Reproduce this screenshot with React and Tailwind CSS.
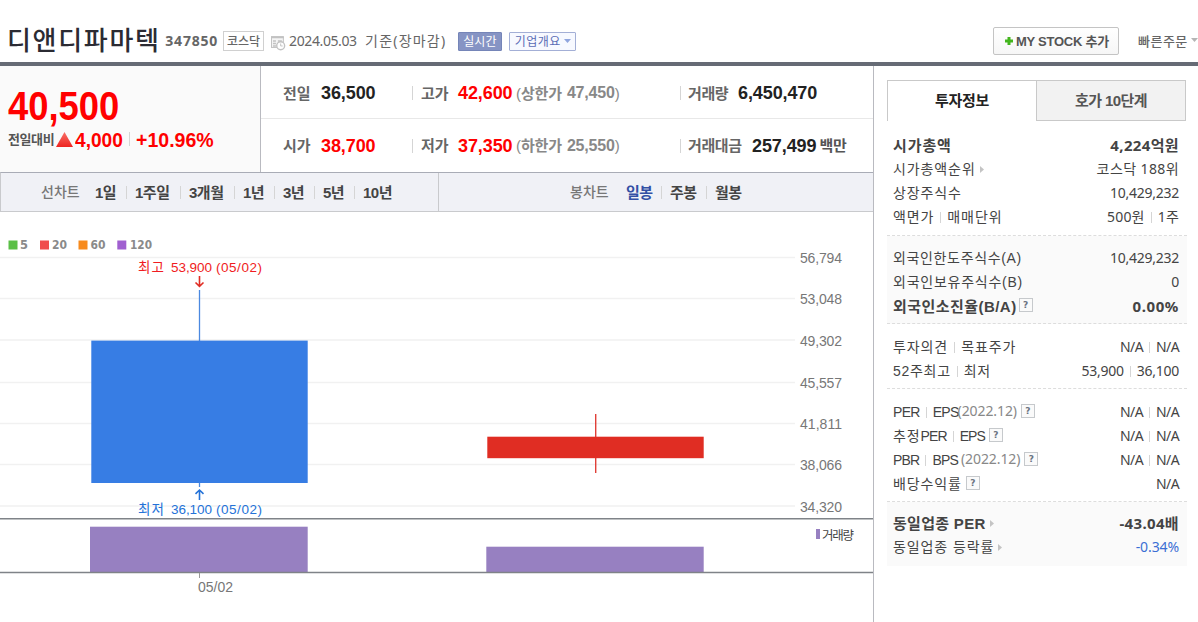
import clsx from "clsx";

const PERIODS = [
  { label: "1일", cell: "w-[40px]" },
  { label: "1주일", cell: "w-[54px]" },
  { label: "3개월", cell: "w-[54px]" },
  { label: "1년", cell: "w-[40px]" },
  { label: "3년", cell: "w-[40px]" },
  { label: "5년", cell: "w-[40px]" },
  { label: "10년", cell: "w-[40px]" },
];

const CANDLES = [
  { label: "일봉", cell: "w-[44px]", active: true },
  { label: "주봉", cell: "w-[45px]" },
  { label: "월봉", cell: "w-[45px]" },
];

const AVERAGES = [
  { x: 8.5, tx: 20, w: 8, label: "5", color: "#5abf46" },
  { x: 40, tx: 52, w: 15, label: "20", color: "#f04d4d" },
  { x: 78.5, tx: 90.5, w: 15, label: "60", color: "#f78a1d" },
  { x: 117.3, tx: 130, w: 22, label: "120", color: "#a05fd0" },
];

const GRID = [
  { y: 257.5, label: "56,794" },
  { y: 298.5, label: "53,048" },
  { y: 340, label: "49,302" },
  { y: 382.5, label: "45,557" },
  { y: 423.5, label: "41,811" },
  { y: 464.5, label: "38,066" },
  { y: 506, label: "34,320" },
];

const LATIN_KR = "font-['Liberation_Sans','Noto_Sans_CJK_KR',sans-serif]";
const TAHOMA_KR = "font-['Noto_Sans','Noto_Sans_CJK_KR',sans-serif]";

function Divider({ className }) {
  return <span className={clsx("inline-block w-px shrink-0 bg-[#d5d5d5]", className)} />;
}

function Help({ className }) {
  return (
    <span
      className={clsx(
        "relative -top-px inline-grid h-[14px] w-[14px] shrink-0 place-items-center border border-[#c6c9cc] bg-[#fafafa] font-['DejaVu_Sans',sans-serif] text-[9px] leading-none font-bold tracking-normal text-[#6b7482]",
        className
      )}
    >
      ?
    </span>
  );
}

function Arrow({ className }) {
  return (
    <svg width="4" height="7" className={clsx("shrink-0", className)}>
      <path d="M0 0L4 3.5L0 7Z" fill="#c4c4c4" />
    </svg>
  );
}

function Row({ children, value, bold, valueClass = "text-[14px] tracking-[-0.25px]" }) {
  return (
    <div
      className={clsx(
        "flex h-[24px] items-center justify-between pr-[8px] pl-[6px] leading-none whitespace-nowrap text-[#444]",
        bold && "font-bold text-[#333]"
      )}
    >
      <div className={clsx("flex items-center tracking-[0.9px]", bold ? "text-[15px]" : "text-[14px]", LATIN_KR)}>
        {children}
      </div>
      <div className={clsx("flex items-center", TAHOMA_KR, valueClass)}>{value}</div>
    </div>
  );
}

function Pair({ a, b }) {
  return (
    <>
      {a}
      <Divider className="mx-[6px] h-[11px]" />
      {b}
    </>
  );
}

function NotAvailable() {
  return (
    <span className="flex items-center tracking-[-0.6px]">
      <Pair a="N/A" b="N/A" />
    </span>
  );
}

function Header() {
  return (
    <header className="flex h-[66px] items-center border-b-4 border-[#666b75] pt-[20px] pl-[7px] leading-none whitespace-nowrap">
      <h1 className="w-[160px] pb-[4px] font-['Noto_Sans_CJK_KR',sans-serif] text-[26px] font-medium tracking-[1.7px] text-[#2b2b33]">
        디앤디파마텍
      </h1>
      <span className={clsx("w-[57px] text-[14px] font-bold tracking-[0.8px] text-[#666]", TAHOMA_KR)}>
        347850
      </span>
      <span className="ml-px grid h-[20px] w-[42px] place-items-center border border-[#d0d0d0] font-['Noto_Sans_CJK_KR',sans-serif] text-[12px] font-medium text-[#666]">
        코스닥
      </span>
      <svg width="16" height="16" viewBox="0 0 16 16" className="mt-[4px] ml-[6px]" fill="none" stroke="#c2c2c2">
        <rect x="1.5" y="1.5" width="12" height="11" fill="#f5f5f5" />
        <path d="M1 2.5H14M3 6H6M3 8.5H6M3 11H6M8 6H12" strokeWidth="1.6" />
        <circle cx="10.8" cy="10.8" r="4" fill="#fff" strokeWidth="1.4" />
        <path d="M10.8 8.5V11H12.8" />
      </svg>
      <span className={clsx("ml-[3px] flex items-center text-[#666]", TAHOMA_KR)}>
        <span className="w-[76px] text-[14px] tracking-[-0.4px]">2024.05.03</span>
        <span className="w-[93px] text-[14px] tracking-[1.2px]">기준(장마감)</span>
      </span>
      <span className="grid h-[19px] w-[44px] place-items-center rounded-[1px] border border-[#7585b8] bg-[#8694c4] font-['Noto_Sans_CJK_KR',sans-serif] text-[12px] text-white">
        실시간
      </span>
      <span className="ml-[7px] flex h-[19px] w-[68px] items-center rounded-[1px] border border-[#a3afd6] bg-[#f7f9ff] pl-[5px] font-['Noto_Sans_CJK_KR',sans-serif] text-[12px] tracking-[0.5px] text-[#5b6db5]">
        기업개요
        <svg width="7" height="4" className="ml-[3px]">
          <path d="M0 0H7L3.5 4Z" fill="#8fa5de" />
        </svg>
      </span>
      <button
        className={clsx(
          "ml-[417px] flex h-[28px] w-[126px] shrink-0 items-center rounded-[2px] border border-[#c4c4c4] bg-linear-to-b from-white to-[#f6f6f6] pl-[11px] text-[13px] font-bold tracking-[-0.25px] text-[#555]",
          LATIN_KR
        )}
      >
        <svg width="8" height="8" className="mr-[3px]">
          <path d="M2.5 0H5.5V2.5H8V5.5H5.5V8H2.5V5.5H0V2.5H2.5Z" fill="#42b51c" />
        </svg>
        MY STOCK 추가
      </button>
      <span className="ml-[19px] w-[53px] shrink-0 pb-px font-['Noto_Sans_CJK_KR',sans-serif] text-[13px] font-medium tracking-[0.5px] text-[#666]">
        빠른주문
      </span>
      <svg width="7" height="4" className="mb-[2px] shrink-0">
        <path d="M0 0H7L3.5 4Z" fill="#b5b5b5" />
      </svg>
    </header>
  );
}

function Price() {
  return (
    <div className={clsx("w-[261px] border-r border-[#b9bac0] bg-[#fafafa] pl-[8px] leading-none font-bold text-[#f00]", LATIN_KR)}>
      <div className="origin-left scale-x-[0.91] pt-[20px] text-[40px]">40,500</div>
      <div className="flex h-[26px] items-center text-[21px] whitespace-nowrap">
        <span className="w-[48px] text-[13px] tracking-[-0.4px] text-[#555]">전일대비</span>
        <svg width="17" height="15" className="mr-[2px]">
          <defs>
            <linearGradient id="up" x1="0" y1="0" x2="0" y2="1">
              <stop offset="0" stopColor="#f87068" />
              <stop offset="1" stopColor="#ee2420" />
            </linearGradient>
          </defs>
          <path d="M8.5 0L17 15H0Z" fill="url(#up)" />
        </svg>
        <span className="w-[54px] origin-left scale-x-[0.91]">4,000</span>
        <Divider className="mr-[6px] h-[14px]" />
        <span className="origin-left scale-x-[0.93]">+10.96%</span>
      </div>
    </div>
  );
}

function Limit({ label, value }) {
  return (
    <span className="flex w-[164px] items-center text-[15px] text-[#888]">
      <span className="font-normal">(</span>
      <span className="w-[46px]">{label}</span>
      <span className="text-[16px] tracking-[-0.2px]">{value}</span>
      <span className="font-normal">)</span>
    </span>
  );
}

function Quotes() {
  const rows = [
    {
      a: "전일", av: "36,500", red: false, b: "고가", bv: "42,600",
      limit: "상한가", lv: "47,450", c: "거래량", cv: "6,450,470", cw: "w-[50px]",
    },
    {
      a: "시가", av: "38,700", red: true, b: "저가", bv: "37,350",
      limit: "하한가", lv: "25,550", c: "거래대금", cv: "257,499", cw: "w-[64px]", unit: "백만",
    },
  ];
  return (
    <div className={clsx("flex-1 leading-none font-bold whitespace-nowrap", LATIN_KR)}>
      {rows.map((r, i) => (
        <div
          key={r.a}
          className={clsx("flex h-[53px] items-center pl-[22px] text-[18px] tracking-[-0.1px] text-[#222]", i === 0 && "border-b border-[#e8e8e8] pt-[2px]")}
        >
          <span className="w-[38px] text-[15px] text-[#666]">{r.a}</span>
          <span className={clsx("w-[91px]", r.red && "text-[#f00]")}>{r.av}</span>
          <Divider className="h-[14px]" />
          <span className="ml-[8px] w-[37px] text-[15px] text-[#666]">{r.b}</span>
          <span className="w-[58px] text-[#f00]">{r.bv}</span>
          <Limit label={r.limit} value={r.lv} />
          <Divider className="h-[14px]" />
          <span className={clsx("ml-[7px] text-[15px] tracking-[-0.4px] text-[#666]", r.cw)}>{r.c}</span>
          <span>{r.cv}</span>
          {r.unit && <span className="ml-[3px] text-[15px] text-[#555]">{r.unit}</span>}
        </div>
      ))}
    </div>
  );
}

function ChartTabs() {
  return (
    <div className={clsx("flex h-[40px] border-y border-l border-t-[#a9acb6] border-b-[#c9cacd] border-l-[#c9cacd] bg-[#f0f1f6] text-[15px] leading-none font-bold whitespace-nowrap text-[#444]", LATIN_KR)}>
      <div className="flex w-[438px] items-center border-r border-[#c9cacd] pl-[40px]">
        <span className="w-[45px] text-[14px] font-medium text-[#777]">선차트</span>
        {PERIODS.map((p, i) => (
          <span key={p.label} className={clsx("flex items-center", p.cell)}>
            {i > 0 ? <Divider className="mr-[8px] h-[13px]" /> : <span className="w-[9px]" />}
            <span className="tracking-[-0.5px]">{p.label}</span>
          </span>
        ))}
      </div>
      <div className="flex items-center pl-[131px]">
        <span className="w-[47px] text-[14px] font-medium text-[#777]">봉차트</span>
        {CANDLES.map((c, i) => (
          <span key={c.label} className={clsx("flex items-center", c.cell)}>
            {i > 0 ? <Divider className="mr-[8px] h-[13px]" /> : <span className="w-[9px]" />}
            <span className={clsx("tracking-[-0.6px]", c.active && "text-[#3350a5]")}>{c.label}</span>
          </span>
        ))}
      </div>
    </div>
  );
}

function Chart() {
  return (
    <svg width="873" height="410" viewBox="0 212 873 410" className={clsx("block text-[14px]", LATIN_KR)}>
      {GRID.map((g) => (
        <g key={g.label}>
          <path d={`M0 ${g.y}H795`} stroke="#f1f1f1" strokeWidth="1.5" />
          <text x="800" y={g.y + 5.8} textLength="42" fill="#777">{g.label}</text>
        </g>
      ))}
      {AVERAGES.map((a) => (
        <g key={a.label} fontSize="12" fontWeight="700">
          <rect x={a.x} y="240.5" width="9" height="9" fill={a.color} />
          <text x={a.tx} y="249.2" textLength={a.w} lengthAdjust="spacingAndGlyphs" fill="#8a8a8a" fontFamily="DejaVu Sans">{a.label}</text>
        </g>
      ))}

      {/* 05/02 candle */}
      <path d="M199.5 290V487" stroke="#4b89e0" strokeWidth="1.3" />
      <rect x="91.3" y="340.6" width="216.4" height="142.4" fill="#377de4" />
      {/* 05/03 candle */}
      <path d="M595.7 414V473" stroke="#e04038" strokeWidth="1.4" />
      <rect x="487.3" y="436.7" width="216.4" height="21.5" fill="#e02d23" />

      <g fill="#f01c22" fontSize="13.5">
        <text x="138" y="272" textLength="26">최고</text>
        <text x="171" y="272" textLength="41">53,900</text>
        <text x="216" y="272" textLength="46">(05/02)</text>
      </g>
      <path d="M199.5 276V286M195.5 282.5L199.5 286.3L203.5 282.5" fill="none" stroke="#e02d23" strokeWidth="1.6" />
      <g fill="#2472d8" fontSize="13.5">
        <text x="138" y="514" textLength="26">최저</text>
        <text x="171" y="514" textLength="41">36,100</text>
        <text x="216" y="514" textLength="46">(05/02)</text>
      </g>
      <path d="M199.5 500V490M195.5 493.8L199.5 490L203.5 493.8" fill="none" stroke="#2472d8" strokeWidth="1.6" />

      <rect x="90" y="526.7" width="217.7" height="45.3" fill="#9780c1" />
      <rect x="486.3" y="546.7" width="217.4" height="25.3" fill="#9780c1" />
      <path d="M0 518.7H873M0 572.4H873" stroke="#7f8388" strokeWidth="1.5" />
      <path d="M199.5 573V578" stroke="#999" />
      <text x="198" y="591.5" textLength="35" fontSize="14" fill="#777">05/02</text>
      <rect x="816" y="529" width="4" height="10" fill="#9780c1" />
      <text x="822" y="539.5" textLength="32" fontSize="12.5" fill="#444">거래량</text>
    </svg>
  );
}

function Info() {
  const boldValue = "text-[15px] tracking-[0.35px]";
  return (
    <aside className="w-[313px] pt-[14px] pl-[13px]">
      <div className={clsx("flex h-[41px] text-[15px] leading-none font-bold", LATIN_KR)}>
        <div className="grid w-[149px] place-items-center border-t border-l border-[#c9c9c9] pb-px tracking-[-0.3px] text-[#222]">투자정보</div>
        <div className="grid w-[150px] place-items-center border border-[#c9c9c9] bg-[#f2f2f2] pb-px tracking-[-0.6px] text-[#555]">호가 10단계</div>
      </div>

      <section className="h-[115px] border-b border-dashed border-[#ddd] pt-[12px]">
        <Row bold value="4,224억원" valueClass={boldValue}>시가총액</Row>
        <Row value={<span className="tracking-[0.4px]">코스닥 188위</span>}>시가총액순위<Arrow className="ml-[4px]" /></Row>
        <Row value="10,429,232">상장주식수</Row>
        <Row value={<span className="flex items-center tracking-[0.2px]"><Pair a="500원" b="1주" /></span>}><Pair a="액면가" b="매매단위" /></Row>
      </section>

      <section className="h-[88px] border-b border-dashed border-[#ddd] bg-[#fafafa] pt-[10px]">
        <Row value="10,429,232"><span className="tracking-[0.65px]">외국인한도주식수(A)</span></Row>
        <Row value="0"><span className="tracking-[0.75px]">외국인보유주식수(B)</span></Row>
        <Row bold value="0.00%" valueClass="text-[15px] tracking-[0.6px]">
          <span className="tracking-[0.45px]">외국인소진율(B/A)</span>
          <Help className="ml-[2px]" />
        </Row>
      </section>

      <section className="h-[65px] border-b border-dashed border-[#ddd] pt-[11px]">
        <Row value={<NotAvailable />}><Pair a="투자의견" b="목표주가" /></Row>
        <Row value={<Pair a="53,900" b="36,100" />}><span className="flex items-center tracking-[0.7px]"><Pair a="52주최고" b="최저" /></span></Row>
      </section>

      <section className="h-[113px] border-b border-dashed border-[#ddd] pt-[11px]">
        <Row value={<NotAvailable />}>
          <span className="flex items-center tracking-[-0.7px]"><Pair a="PER" b="EPS" /></span>
          <span className={clsx("relative -top-px -ml-px text-[14px] tracking-[-0.1px] text-[#888]", TAHOMA_KR)}>(2022.12)</span>
          <Help className="ml-[4px]" />
        </Row>
        <Row value={<NotAvailable />}>
          추정<span className="flex items-center tracking-[-0.9px]"><Pair a="PER" b="EPS" /></span>
          <Help className="ml-[4px]" />
        </Row>
        <Row value={<NotAvailable />}>
          <span className="flex items-center tracking-[-0.8px]"><Pair a="PBR" b="BPS" /></span>
          <span className={clsx("relative -top-px ml-[3px] text-[14px] tracking-[-0.1px] text-[#888]", TAHOMA_KR)}>(2022.12)</span>
          <Help className="ml-[4px]" />
        </Row>
        <Row value={<span className="tracking-[-0.6px]">N/A</span>}>배당수익률<Help className="ml-[4px]" /></Row>
      </section>

      <section className="h-[64px] bg-[#fafafa] pt-[9px]">
        <Row bold value="-43.04배" valueClass={boldValue}>
          <span className="tracking-[0.3px]">동일업종 PER</span>
          <Arrow className="ml-[4px]" />
        </Row>
        <Row value="-0.34%" valueClass="text-[14px] tracking-[-0.1px] text-[#3b6fd4]">동일업종 등락률<Arrow className="ml-[4px]" /></Row>
      </section>
    </aside>
  );
}

export default function App() {
  return (
    <div className="h-[622px] w-[1198px] overflow-hidden bg-white">
      <Header />
      <main className="flex h-[556px]">
        <div className="w-[874px] border-r border-[#b9bac0]">
          <div className="flex h-[106px]">
            <Price />
            <Quotes />
          </div>
          <ChartTabs />
          <Chart />
        </div>
        <Info />
      </main>
    </div>
  );
}
